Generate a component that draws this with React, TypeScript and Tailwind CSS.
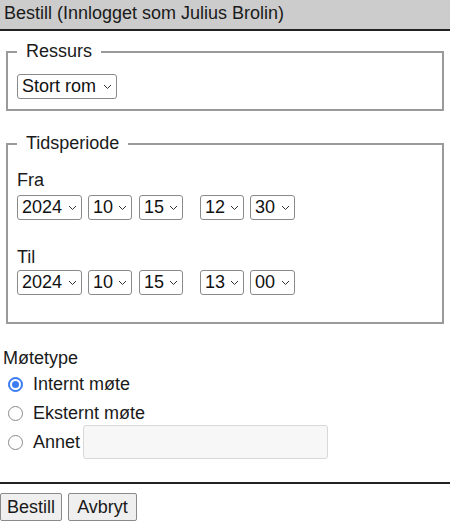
import React from 'react'

const font = { fontFamily: '"Liberation Sans", Arial, sans-serif' }

function Chevron() {
    return (
        <svg className="pointer-events-none absolute right-[5px] top-[10px]" width="9" height="6" viewBox="0 0 9 6" fill="none">
            <path d="M1 1l3.5 3.5L8 1" stroke="#333" strokeWidth="1" />
        </svg>
    )
}

function Select({ value, options, width }: { value: string; options: string[]; width: string }) {
    return (
        <span className={`relative inline-block h-[25px] ${width}`}>
            <select
                defaultValue={value}
                className="h-full w-full appearance-none rounded-[3px] border border-[#8a8a8a] bg-white pl-[4px] pr-[16px] text-[18px] leading-[23px] text-[#111]"
            >
                {options.map((o) => (
                    <option key={o}>{o}</option>
                ))}
            </select>
            <Chevron />
        </span>
    )
}

function DateRow({ y, m, d, h, min }: { y: string; m: string; d: string; h: string; min: string }) {
    return (
        <div className="flex items-center">
            <Select value={y} options={['2024', '2025']} width="w-[65px]" />
            <span className="ml-[6px]"><Select value={m} options={['09', '10', '11']} width="w-[44px]" /></span>
            <span className="ml-[7px]"><Select value={d} options={['14', '15', '16']} width="w-[44px]" /></span>
            <span className="ml-[17px]"><Select value={h} options={['12', '13', '14']} width="w-[44px]" /></span>
            <span className="ml-[6px]"><Select value={min} options={['00', '30']} width="w-[45px]" /></span>
        </div>
    )
}

function Radio({ checked }: { checked?: boolean }) {
    return (
        <span
            className={`inline-flex h-[15px] w-[15px] items-center justify-center rounded-full border ${checked ? 'border-[#3b7df0] bg-[#3b7df0]' : 'border-[#8a8a8a] bg-white'}`}
        >
            {checked && (
                <span className="flex h-[11px] w-[11px] items-center justify-center rounded-full bg-white">
                    <span className="h-[7px] w-[7px] rounded-full bg-[#3b7df0]" />
                </span>
            )}
        </span>
    )
}

export default function App() {
    return (
        <div className="h-[528px] w-[450px] bg-white text-[18px] leading-[21px] text-[#1a1a1a]" style={font}>
            {/* header */}
            <div className="h-[31px] border-b-2 border-[#222] bg-[#cccccc] pl-[4px] pt-[3px]">
                Bestill (Innlogget som Julius Brolin)
            </div>

            {/* Ressurs */}
            <fieldset className="mx-[6px] mt-[10px] border-2 border-[#9a9a9a] pb-[10px] pl-[9px]">
                <legend className="px-[9px]">Ressurs</legend>
                <div className="mt-[12px]">
                    <Select value="Stort rom" options={['Stort rom', 'Lite rom']} width="w-[100px]" />
                </div>
            </fieldset>

            {/* Tidsperiode */}
            <fieldset className="mx-[6px] mt-[22px] h-[191px] border-2 border-[#9a9a9a] pl-[9px]">
                <legend className="px-[9px]">Tidsperiode</legend>
                <div className="mt-[16px]">Fra</div>
                <div className="mt-[4px]">
                    <DateRow y="2024" m="10" d="15" h="12" min="30" />
                </div>
                <div className="mt-[27px]">Til</div>
                <div className="mt-[2px]">
                    <DateRow y="2024" m="10" d="15" h="13" min="00" />
                </div>
            </fieldset>

            {/* Møtetype */}
            <div className="mt-[24px] pl-[3px]">Møtetype</div>
            <div className="mt-[5px] flex flex-col">
                <label className="flex items-center gap-[10px] pl-[8px]">
                    <Radio checked />
                    <span>Internt møte</span>
                </label>
                <label className="mt-[8px] flex items-center gap-[10px] pl-[8px]">
                    <Radio />
                    <span>Eksternt møte</span>
                </label>
                <label className="mt-[1px] flex items-center gap-[10px] pl-[8px]">
                    <Radio />
                    <span>Annet</span>
                    <input className="ml-[-7px] h-[34px] w-[245px] rounded-[3px] border border-[#d8d8d8] bg-[#f7f7f7]" />
                </label>
            </div>

            <div className="mt-[23px] border-t-2 border-[#222]" />

            <div className="mt-[9px] flex gap-[6px]">
                <button className="h-[28px] w-[62px] rounded-[2px] border border-[#8a8a8a] bg-[#efefef] text-[18px] leading-[24px]">Bestill</button>
                <button className="h-[28px] w-[69px] rounded-[2px] border border-[#8a8a8a] bg-[#efefef] text-[18px] leading-[24px]">Avbryt</button>
            </div>
        </div>
    )
}
